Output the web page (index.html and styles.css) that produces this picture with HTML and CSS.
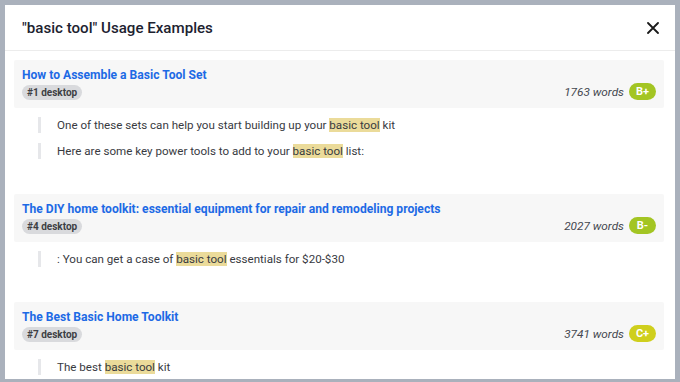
FILE: index.html
```html
<!DOCTYPE html>
<html>
<head>
<meta charset="utf-8">
<link rel="stylesheet" href="styles.css">
</head>
<body>
<div class="modal">
  <div class="modal-header">
    <h1 class="modal-title">"basic tool" Usage Examples</h1>
    <button class="close" aria-label="Close">
      <svg width="12" height="12" viewBox="0 0 12 12"><path d="M1 1 L11 11 M11 1 L1 11" stroke="#1a1a1a" stroke-width="1.8" stroke-linecap="round"/></svg>
    </button>
  </div>
  <div class="modal-body">
    <section class="result">
      <div class="card">
        <div class="card-left">
          <a class="card-title">How to Assemble a Basic Tool Set</a>
          <span class="rank">#1 desktop</span>
        </div>
        <div class="card-right">
          <span class="words">1763 words</span>
          <span class="grade grade-b">B+</span>
        </div>
      </div>
      <div class="quotes">
        <p class="quote">One of these sets can help you start building up your <mark>basic tool</mark> kit</p>
        <p class="quote">Here are some key power tools to add to your <mark>basic tool</mark> list:</p>
      </div>
    </section>
    <section class="result">
      <div class="card">
        <div class="card-left">
          <a class="card-title">The DIY home toolkit: essential equipment for repair and remodeling projects</a>
          <span class="rank">#4 desktop</span>
        </div>
        <div class="card-right">
          <span class="words">2027 words</span>
          <span class="grade grade-b">B-</span>
        </div>
      </div>
      <div class="quotes">
        <p class="quote">: You can get a case of <mark>basic tool</mark> essentials for $20-$30</p>
      </div>
    </section>
    <section class="result">
      <div class="card">
        <div class="card-left">
          <a class="card-title">The Best Basic Home Toolkit</a>
          <span class="rank">#7 desktop</span>
        </div>
        <div class="card-right">
          <span class="words">3741 words</span>
          <span class="grade grade-c">C+</span>
        </div>
      </div>
      <div class="quotes">
        <p class="quote">The best <mark>basic tool</mark> kit</p>
      </div>
    </section>
  </div>
</div>
</body>
</html>
```

FILE: styles.css
```css
* { box-sizing: border-box; }
html, body { margin: 0; height: 382px; overflow: hidden; }
body {
  background: #aab1bc;
  padding: 5px 5px 0 5px;
  font-family: Roboto, "Noto Sans", sans-serif;
}
.modal {
  background: #ffffff;
  width: 670px;
  height: 374px;
  overflow: hidden;
}
.modal-header {
  height: 46px;
  padding: 0 16px 0 17px;
  display: flex;
  align-items: center;
  justify-content: space-between;
  border-bottom: 1px solid #ececec;
}
.modal-title {
  margin: 0;
  font-size: 15.1px;
  font-weight: 500;
  color: #1d2230;
}
.close {
  border: 0;
  background: none;
  padding: 0;
  width: 12px;
  height: 12px;
  display: flex;
  margin-right: 0;
}
.modal-body {
  padding: 9px 11px 0 9px;
}
.result { margin-bottom: 35px; }
.card {
  background: #f7f7f7;
  height: 48px;
  padding: 7px 8px 8px 8px;
  display: flex;
  justify-content: space-between;
  border-radius: 2px;
}
.card-left {
  display: flex;
  flex-direction: column;
  align-items: flex-start;
}
.card-title {
  font-size: 12.1px;
  line-height: 17px;
  font-weight: 700;
  color: #1d6ae5;
}
.rank {
  margin-top: 1px;
  height: 15px;
  line-height: 15px;
  padding: 0 5px;
  border-radius: 8px;
  background: #d9dadd;
  color: #3e3f44;
  font-size: 10px;
  font-weight: 700;
}
.card-right {
  align-self: flex-end;
  display: flex;
  align-items: center;
  gap: 5px;
  margin-bottom: 0;
}
.words {
  font-size: 11.8px;
  font-style: italic;
  color: #44474f;
}
.grade {
  width: 27px;
  height: 17px;
  line-height: 17px;
  border-radius: 9px;
  text-align: center;
  color: #ffffff;
  font-size: 11px;
  font-weight: 700;
}
.grade-b { background: #a3c523; }
.grade-c { background: #cfcf1d; }
.quotes {
  padding: 9px 0 0 24px;
  display: flex;
  flex-direction: column;
  gap: 10px;
}
.quote {
  margin: 0;
  height: 16px;
  line-height: 16px;
  border-left: 3px solid #e6e7ea;
  padding-left: 16px;
  font-size: 11.6px;
  color: #383a3f;
}
mark {
  background: #ebdb9a;
  color: inherit;
}
```
